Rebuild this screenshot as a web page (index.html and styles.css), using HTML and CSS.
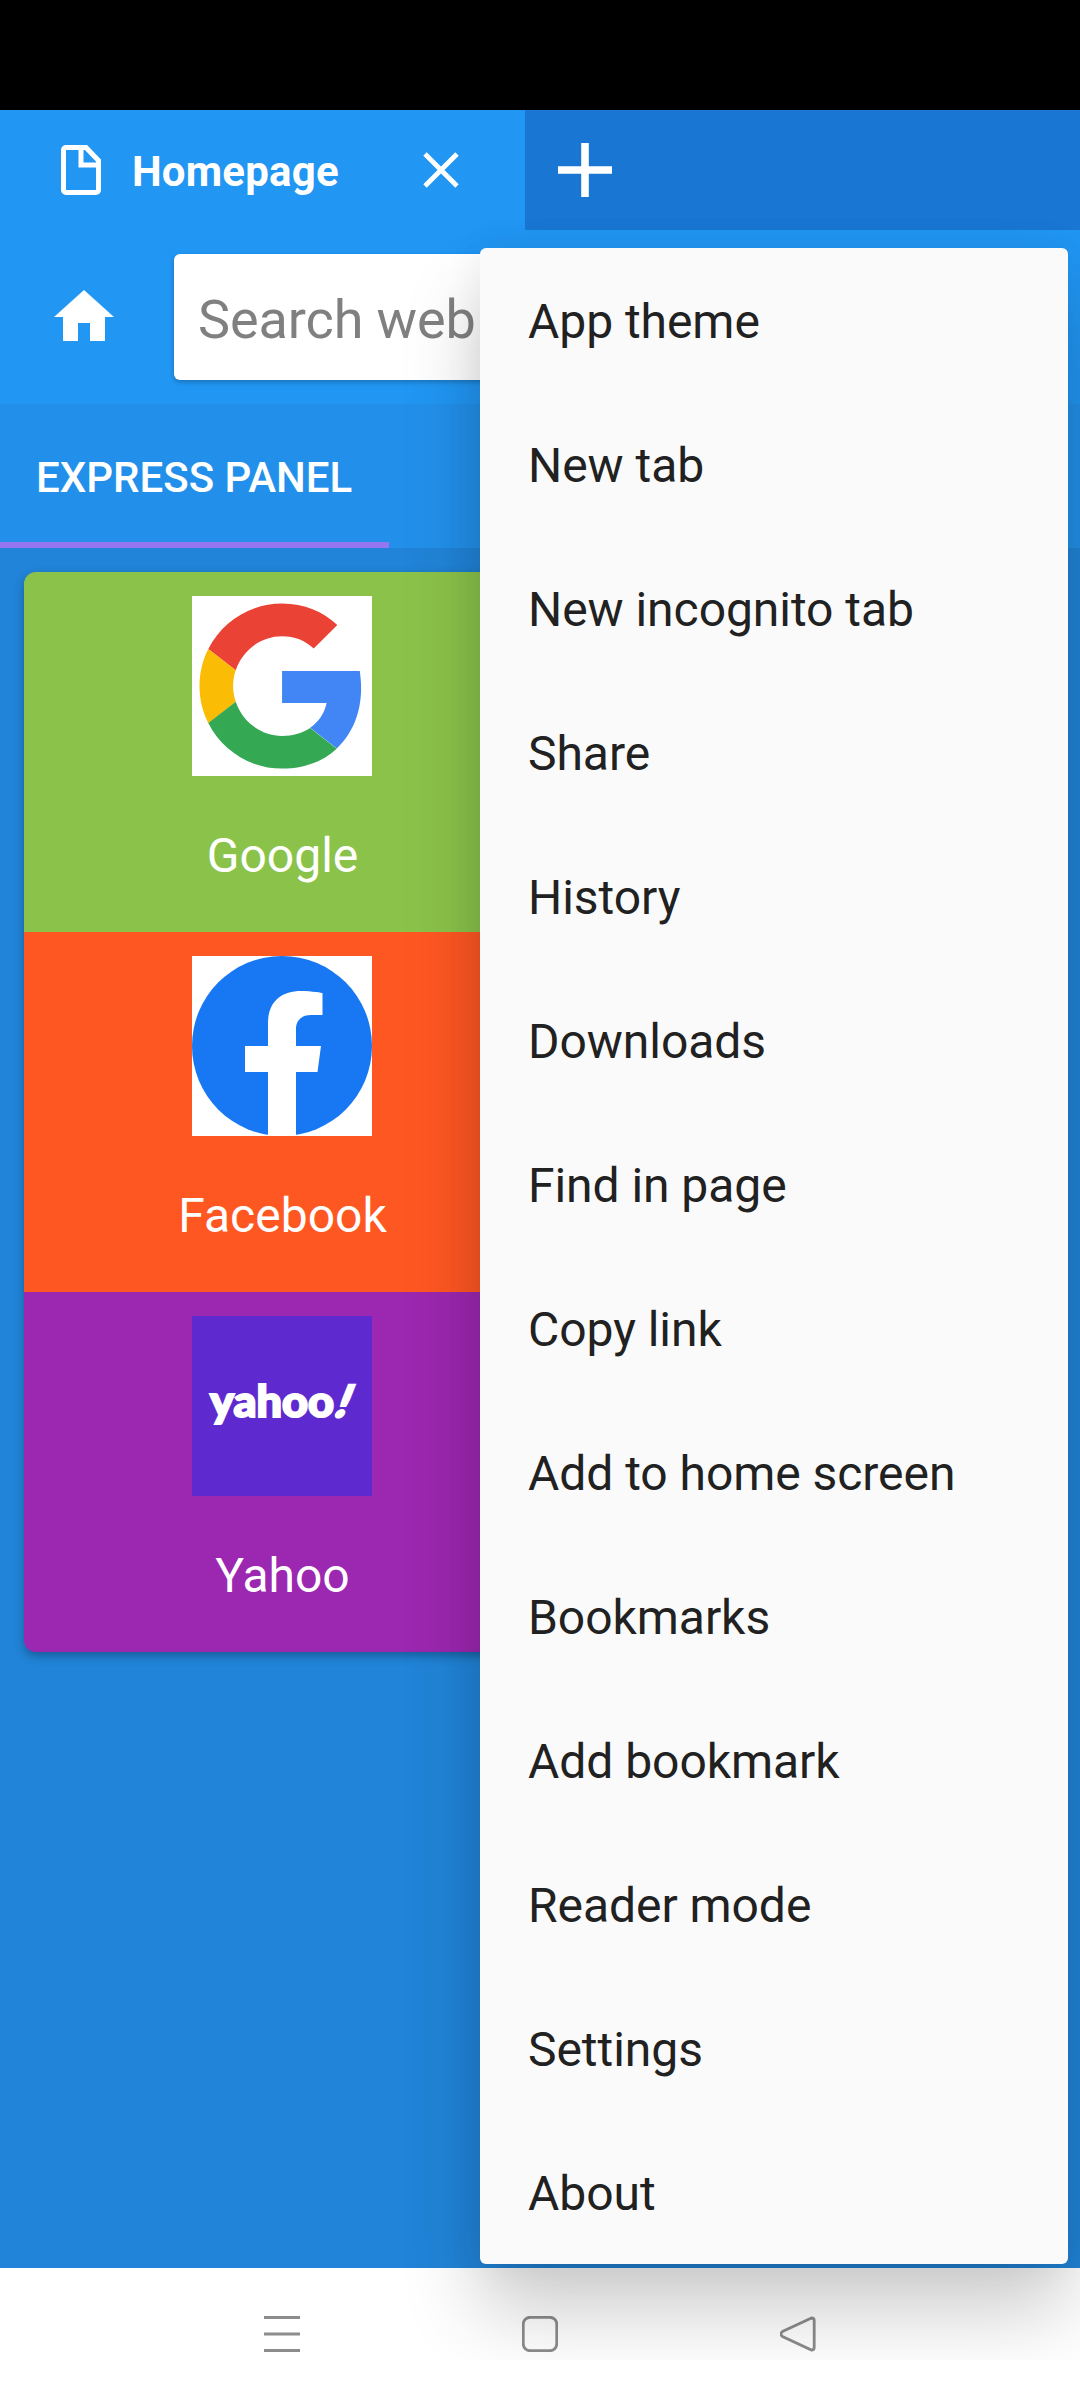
FILE: index.html
```html
<!DOCTYPE html>
<html lang="en">
<head>
    <meta charset="UTF-8">
    <meta name="viewport" content="width=device-width, initial-scale=1.0">
    <title>Homepage</title>
    <link rel="stylesheet" href="styles.css">
</head>
<body>
    <div class="screen">
        <div class="status-bar"></div>

        <!-- Tabs -->
        <div class="tab-bar">
            <div class="tab">
                <svg class="tab-icon" viewBox="0 0 40 50">
                    <path d="M5 2.5h20L37.500 15.500V45a2.500 2.500 0 0 1-2.500 2.500H5A2.500 2.500 0 0 1 2.500 45V5A2.500 2.500 0 0 1 5 2.500zM20 2.500v17.500h17.500" fill="none" stroke="#fff" stroke-width="5"/>
                </svg>
                <span class="tab-title">Homepage</span>
                <svg class="tab-close" viewBox="0 0 36 36">
                    <path d="M2 2l32 32M34 2L2 34" stroke="#fff" stroke-width="4.800"/>
                </svg>
            </div>
            <button class="tab-add" aria-label="New tab">
                <svg viewBox="0 0 54 54">
                    <path d="M27 0v54M0 27h54" stroke="#fff" stroke-width="7.600"/>
                </svg>
            </button>
        </div>

        <!-- Toolbar -->
        <div class="toolbar">
            <svg class="home-icon" viewBox="0 0 24 24">
                <path d="M10 20v-6h4v6h5v-8h3L12 3 2 12h3v8z" fill="#fff"/>
            </svg>
            <div class="search">Search web</div>
        </div>

        <div class="panel-tabs">
            <div class="panel-tab">EXPRESS PANEL</div>
        </div>

        <!-- Express panel -->
        <main class="content">
            <div class="card">
                <div class="tile google">
                    <svg class="tile-logo" viewBox="0 0 180 180">
                        <rect width="180" height="180" fill="#fff"/>
                        <g transform="translate(7.500 7.500) scale(3.440)">
                            <path fill="#ea4335" d="M24 9.500c3.540 0 6.710 1.220 9.210 3.600l6.850-6.850C35.900 2.380 30.470 0 24 0 14.620 0 6.510 5.380 2.560 13.220l7.980 6.190C12.430 13.720 17.740 9.500 24 9.500z"/>
                            <path fill="#4285f4" d="M46.980 24.550c0-1.570-.15-3.090-.38-4.900H24v9.300h12.940c-.58 2.960-2.260 5.480-4.780 7.180l7.730 6c4.510-4.180 7.090-10.360 7.090-17.580z"/>
                            <path fill="#fbbc05" d="M10.530 28.590c-.48-1.450-.76-2.990-.76-4.590s.27-3.140.76-4.590l-7.980-6.190C.92 16.460 0 20.120 0 24c0 3.880.92 7.540 2.560 10.780l7.970-6.190z"/>
                            <path fill="#34a853" d="M24 48c6.480 0 11.930-2.130 15.890-5.810l-7.730-6c-2.150 1.450-4.920 2.300-8.160 2.300-6.260 0-11.570-4.220-13.470-9.910l-7.980 6.190C6.510 42.620 14.620 48 24 48z"/>
                        </g>
                    </svg>
                    <span class="tile-name">Google</span>
                </div>
                <div class="tile facebook">
                    <svg class="tile-logo" viewBox="0 0 180 180">
                        <rect width="180" height="180" fill="#fff"/>
                        <circle cx="90" cy="90" r="90" fill="#1877f2"/>
                        <path fill="#fff" d="M76 180V116H53V90H76V67C76 46 89 35 109 35C120 35 130.500 37 130.500 37V59H119C108 59 104 66 104 73V90H129L125.500 116H104V180z"/>
                    </svg>
                    <span class="tile-name">Facebook</span>
                </div>
                <div class="tile yahoo">
                    <svg class="tile-logo" viewBox="0 0 180 180">
                        <rect width="180" height="180" fill="#5f29d0"/>
                        <text class="yahoo-text" x="18" y="101" textLength="124" lengthAdjust="spacingAndGlyphs">yahoo</text>
                        <text class="yahoo-text yahoo-mark" transform="translate(140.500 101) skewX(-22)">!</text>
                    </svg>
                    <span class="tile-name">Yahoo</span>
                </div>
            </div>
        </main>

        <!-- System navigation -->
        <nav class="nav-bar">
            <svg viewBox="0 0 36 36"><path d="M0 1.500h36M0 18h36M0 34.500h36"/></svg>
            <svg viewBox="0 0 36 36"><rect x="1.250" y="1.250" width="33.500" height="33.500" rx="7"/></svg>
            <svg viewBox="0 0 36 36"><path d="M31.500 2L2.500 15.500Q-.5 18 2.500 20.500L31.500 34Q34.200 34 34.200 31.500V4.500Q34.200 2 31.500 2z"/></svg>
        </nav>

        <!-- Overflow menu -->
        <ul class="menu">
            <li>App theme</li>
            <li>New tab</li>
            <li>New incognito tab</li>
            <li>Share</li>
            <li>History</li>
            <li>Downloads</li>
            <li>Find in page</li>
            <li>Copy link</li>
            <li>Add to home screen</li>
            <li>Bookmarks</li>
            <li>Add bookmark</li>
            <li>Reader mode</li>
            <li>Settings</li>
            <li>About</li>
        </ul>
    </div>
</body>
</html>
```
FILE: styles.css
```css
* {
    box-sizing: border-box;
}
body {
    margin: 0;
    background: #fff;
    font-family: Roboto, sans-serif;
    color: #fff;
}
svg {
    display: block;
    flex-shrink: 0;
}
.screen {
    position: relative;
    width: 1080px;
    height: 2360px;
    overflow: hidden;
    display: flex;
    flex-direction: column;
}
.status-bar {
    height: 110px;
    background: #000;
}
.tab-bar {
    height: 120px;
    display: flex;
    background: #1976d2;
}
.tab {
    width: 525px;
    display: flex;
    align-items: center;
    padding: 0 66px 0 61px;
    background: #2196f3;
}
.tab-icon {
    width: 40px;
    height: 50px;
}
.tab-title {
    flex: 1;
    padding-left: 31px;
    padding-top: 3px;
    font-size: 42px;
    font-weight: 700;
    letter-spacing: 0.2px;
}
.tab-close {
    width: 36px;
    height: 36px;
}
.tab-add {
    border: none;
    background: none;
    padding: 0 33px;
}
.tab-add svg {
    width: 54px;
    height: 54px;
}
.toolbar {
    height: 174px;
    display: flex;
    align-items: center;
    gap: 54px;
    padding-left: 48px;
    background: #2196f3;
}
.home-icon {
    width: 72px;
    height: 72px;
}
.search {
    flex: 1;
    height: 126px;
    margin-right: 24px;
    padding-left: 24px;
    line-height: 131px;
    border-radius: 6px;
    background: #fff;
    color: #808080;
    font-size: 54px;
    letter-spacing: -0.1px;
    box-shadow: 0 2px 5px rgba(0,0,0,0.25);
}
.panel-tabs {
    height: 144px;
    display: flex;
    background: #2290ea;
}
.panel-tab {
    width: 389px;
    padding-left: 36px;
    line-height: 148px;
    height: 144px;
    font-size: 42px;
    font-weight: 500;
    border-bottom: 6px solid #9575f0;
}
.content {
    height: 1720px;
    padding: 24px;
    background: #2184d8;
}
.card {
    border-radius: 12px;
    overflow: hidden;
    box-shadow: 0 4px 10px rgba(0,0,0,0.3);
}
.tile {
    height: 360px;
    padding: 24px 516px 0 0;
    display: flex;
    flex-direction: column;
    align-items: center;
}
.google {
    background: #8bc34a;
}
.facebook {
    background: #ff5722;
}
.yahoo {
    background: #9c27b0;
}
.tile-logo {
    width: 180px;
    height: 180px;
}
.tile-name {
    margin-top: 52px;
    padding-left: 1px;
    font-size: 48px;
    line-height: 56px;
}
.yahoo-text {
    fill: #fff;
    stroke: #fff;
    stroke-width: 2px;
    font-family: Lato, sans-serif;
    font-size: 43px;
    font-weight: 900;
}
.yahoo-mark {
    font-size: 44px;
    stroke-width: 2.5px;
}
.nav-bar {
    height: 92px;
    display: flex;
    align-items: center;
    justify-content: space-between;
    padding: 40px 264px 0;
    background: #fff;
}
.nav-bar svg {
    width: 36px;
    height: 36px;
    fill: none;
    stroke: #8c8c8c;
    stroke-width: 2.8;
}
.menu {
    position: absolute;
    top: 248px;
    right: 12px;
    width: 588px;
    margin: 0;
    padding: 0;
    list-style: none;
    border-radius: 6px;
    background: #fafafa;
    color: #212121;
    box-shadow: 0 48px 80px rgba(0,0,0,0.2), 0 0 40px rgba(0,0,0,0.06);
}
.menu li {
    height: 144px;
    padding-left: 48px;
    line-height: 147px;
    font-size: 48px;
    letter-spacing: -0.05px;
}
```
